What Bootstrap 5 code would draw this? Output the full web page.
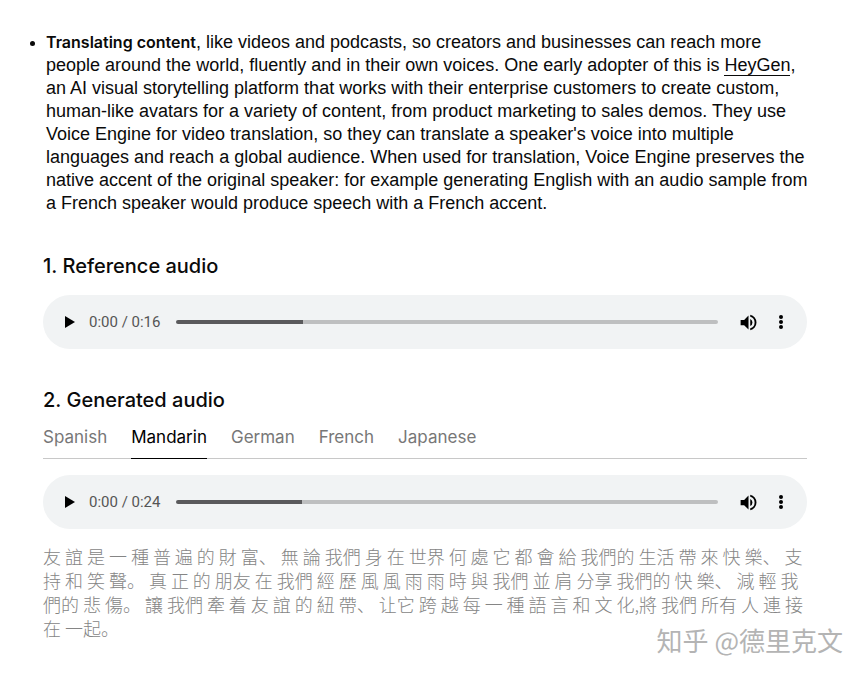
<!DOCTYPE html>
<html lang="en">
<head>
<meta charset="utf-8">
<meta name="viewport" content="width=device-width, initial-scale=1">
<title>Voice Engine</title>
<link href="https://cdn.jsdelivr.net/npm/bootstrap@5.3.0/dist/css/bootstrap.min.css" rel="stylesheet">
<style>
  body { font-family: Inter, "Liberation Sans", sans-serif; font-size: 17px; line-height: 23px; color: #0a0a0a; background: #fff; }
  .article { padding: 31px 43px 36px 43px; }
  .points { padding-left: 3px; margin-bottom: 39px; font-family: "Liberation Sans", sans-serif; font-size: 18px; }
  .points strong { font-family: Inter, sans-serif; font-size: 16px; line-height: 20px; }
  .points li::marker { font-size: 16px; }
  .points a { color: inherit; text-decoration: none; border-bottom: 1px solid #0a0a0a; }
  .panel { margin-right: 14px; }
  .panel + .panel { margin-top: 39px; }
  .section-title { font-size: 20px; line-height: 24px; font-weight: 500; margin: 0 0 17px; }
  .player { background: #f1f3f4; border-radius: 27px; height: 54px; padding: 0 15px 0 16px; }
  .player button { width: 22px; height: 32px; padding: 0; border: 0; background: none; color: #000; }
  .player .more { margin-left: 10px; }
  .clock { font-family: Roboto, sans-serif; font-size: 15px; line-height: 20px; color: #555; white-space: nowrap; }
  .seek { appearance: none; height: 4px; border-radius: 2px; margin: 0 20px 0 16px; min-width: 0;
    background: linear-gradient(to right, #5a5a5c var(--loaded), #bebfc0 var(--loaded)); }
  .seek::-webkit-slider-thumb { appearance: none; width: 0; height: 0; }
  .langs { gap: 24px; border-bottom: 1px solid #c8c8c8; margin: 14px 0 16px; }
  .langs button { border: 0; border-bottom: 1px solid transparent; background: none; padding: 0 0 9px; margin-bottom: -1px; color: #777; line-height: 23px; }
  .langs button.active { color: #000; border-color: #000; }
  .transcript { font-family: "Noto Sans CJK SC", sans-serif; font-size: 18px; line-height: 24px; font-weight: 300; color: #858585; margin: 15px 0 0; white-space: nowrap; }
  .watermark { position: absolute; right: 21px; bottom: 20px; font-family: "Noto Sans CJK SC", sans-serif; font-size: 26px; line-height: 32px; color: #b4b4b4; text-shadow: 1px 1px 0 #fff; }
</style>
</head>
<body>
<main class="article position-relative min-vh-100">
  <ul class="points">
    <li><strong class="fw-semibold">Translating content</strong>, like videos and podcasts, so creators and businesses can reach more<br>
      people around the world, fluently and in their own voices. One early adopter of this is <a href="#">HeyGen</a>,<br>
      an AI visual storytelling platform that works with their enterprise customers to create custom,<br>
      human-like avatars for a variety of content, from product marketing to sales demos. They use<br>
      Voice Engine for video translation, so they can translate a speaker's voice into multiple<br>
      languages and reach a global audience. When used for translation, Voice Engine preserves the<br>
      native accent of the original speaker: for example generating English with an audio sample from<br>
      a French speaker would produce speech with a French accent.</li>
  </ul>

  <section class="panel">
    <h2 class="section-title">1. Reference audio</h2>
    <div class="player d-flex align-items-center">
      <button type="button" aria-label="Play"><svg width="22" height="22" viewBox="0 0 22 22" fill="currentColor" class="d-block"><path d="M6 5v12l10-6z"/></svg></button>
      <span class="clock ms-2">0:00 / 0:16</span>
      <input class="seek flex-grow-1" type="range" min="0" max="16" value="0" aria-label="Seek" style="--loaded:23.5%">
      <button type="button" aria-label="Mute"><svg width="21" height="21" viewBox="0 0 24 24" fill="currentColor" class="d-block"><path d="M3 9v6h4l5 5V4L7 9zm13.500 3A4.500 4.500 0 0 0 14 8v8a4.500 4.500 0 0 0 2.500-4M14 3.200v2.100a7 7 0 0 1 0 13.400v2.100a9 9 0 0 0 0-17.600"/></svg></button>
      <button type="button" class="more" aria-label="More options"><svg width="22" height="22" viewBox="0 0 22 22" fill="currentColor" class="d-block"><circle cx="11" cy="6" r="2"/><circle cx="11" cy="11" r="2"/><circle cx="11" cy="16" r="2"/></svg></button>
    </div>
  </section>

  <section class="panel">
    <h2 class="section-title mb-0">2. Generated audio</h2>
    <div class="langs d-flex" role="tablist">
      <button type="button" role="tab">Spanish</button>
      <button type="button" role="tab" class="active" aria-selected="true">Mandarin</button>
      <button type="button" role="tab">German</button>
      <button type="button" role="tab">French</button>
      <button type="button" role="tab">Japanese</button>
    </div>
    <div class="player d-flex align-items-center">
      <button type="button" aria-label="Play"><svg width="22" height="22" viewBox="0 0 22 22" fill="currentColor" class="d-block"><path d="M6 5v12l10-6z"/></svg></button>
      <span class="clock ms-2">0:00 / 0:24</span>
      <input class="seek flex-grow-1" type="range" min="0" max="24" value="0" aria-label="Seek" style="--loaded:23.3%">
      <button type="button" aria-label="Mute"><svg width="21" height="21" viewBox="0 0 24 24" fill="currentColor" class="d-block"><path d="M3 9v6h4l5 5V4L7 9zm13.500 3A4.500 4.500 0 0 0 14 8v8a4.500 4.500 0 0 0 2.500-4M14 3.200v2.100a7 7 0 0 1 0 13.400v2.100a9 9 0 0 0 0-17.600"/></svg></button>
      <button type="button" class="more" aria-label="More options"><svg width="22" height="22" viewBox="0 0 22 22" fill="currentColor" class="d-block"><circle cx="11" cy="6" r="2"/><circle cx="11" cy="11" r="2"/><circle cx="11" cy="16" r="2"/></svg></button>
    </div>
    <p class="transcript" lang="zh-Hans">友 誼 是 一 種 普 遍 的 財 富、 無 論 我們 身 在 世界 何 處 它 都 會 給 我們的 生活 帶 來 快 樂、 支<br>
      持 和 笑 聲。 真 正 的 朋友 在 我們 經 歷 風 風 雨 雨 時 與 我們 並 肩 分享 我們的 快 樂、 減 輕 我<br>
      們的 悲 傷。 讓 我們 牽 着 友 誼 的 紐 帶、 让它 跨 越 每 一 種 語 言 和 文 化,將 我們 所有 人 連 接<br>
      在 一起。</p>
  </section>
  <div class="watermark" lang="zh-Hans">知乎 @德里克文</div>
</main>
<script src="https://cdn.jsdelivr.net/npm/bootstrap@5.3.0/dist/js/bootstrap.bundle.min.js"></script>
</body>
</html>
